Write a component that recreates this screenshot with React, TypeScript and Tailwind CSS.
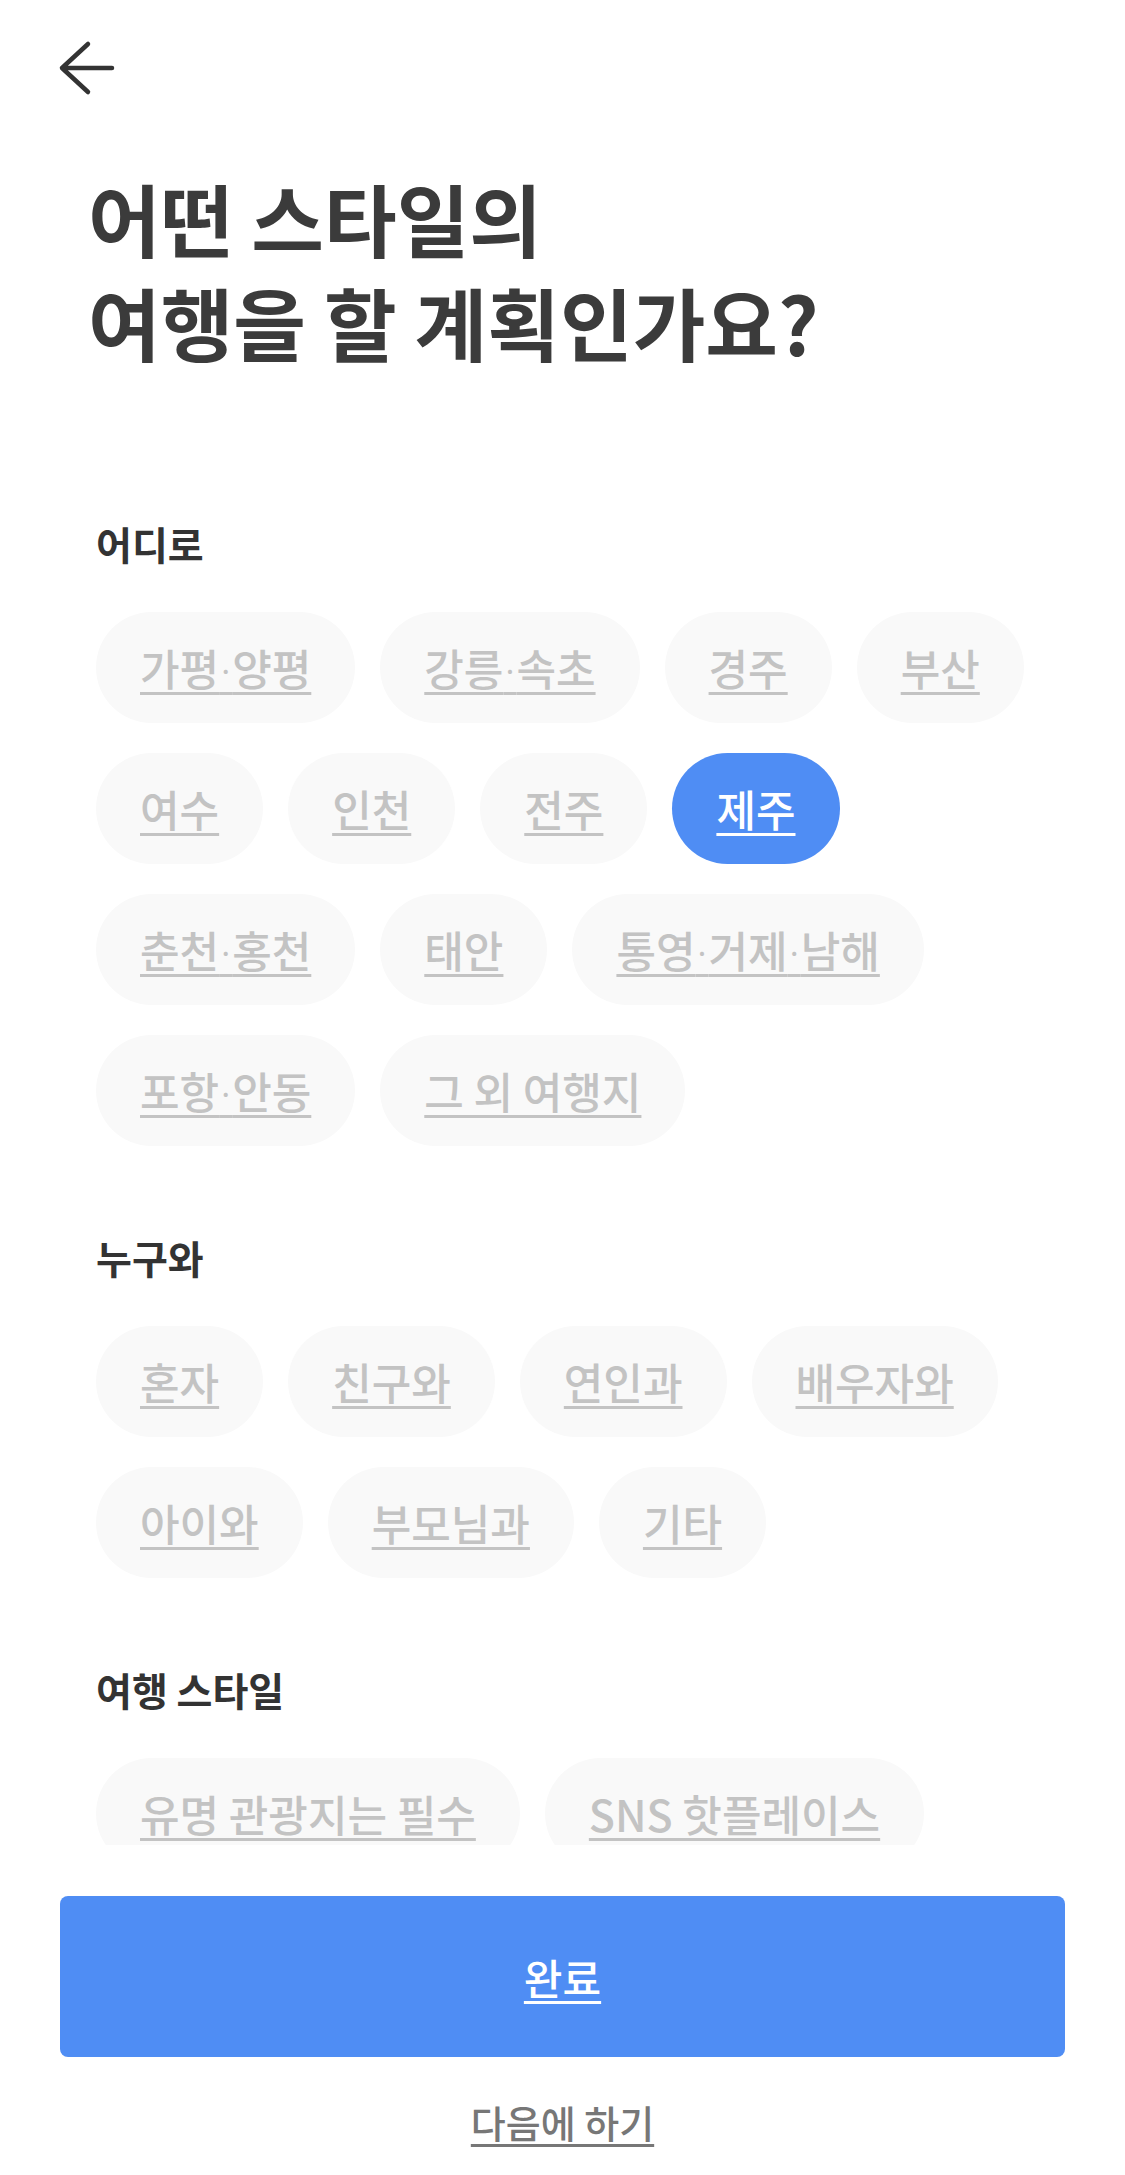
const font = { fontFamily: '"Noto Sans CJK KR", "Noto Sans", sans-serif' };

const regions = [
  "가평·양평",
  "강릉·속초",
  "경주",
  "부산",
  "여수",
  "인천",
  "전주",
  "제주",
  "춘천·홍천",
  "태안",
  "통영·거제·남해",
  "포항·안동",
  "그 외 여행지",
];

const companions = ["혼자", "친구와", "연인과", "배우자와", "아이와", "부모님과", "기타"];

const styles = ["유명 관광지는 필수", "SNS 핫플레이스"];

// the middle dot is set tight, as in the design
function ChipText({ label }: { label: string }) {
  const parts = label.split("·");
  return (
    <>
      {parts.map((part, i) => (
        <span key={i}>
          {i > 0 && <span className="align-[6px] text-[22px] font-bold">·</span>}
          {part}
        </span>
      ))}
    </>
  );
}

function Chip({ label, active }: { label: string; active?: boolean }) {
  return (
    <a
      href="#"
      className={
        active
          ? "flex h-[111px] items-center rounded-full bg-[#4f8df4] px-[44px] text-[43px] font-medium text-white underline decoration-[3px] underline-offset-[6px]"
          : "flex h-[111px] items-center rounded-full bg-[#f9f9f9] px-[44px] text-[43px] font-medium text-[#c3c3c3] underline decoration-[3px] underline-offset-[6px]"
      }
    >
      <ChipText label={label} />
    </a>
  );
}

function Section({ title, items, selected }: { title: string; items: string[]; selected?: string }) {
  return (
    <section className="mt-[86px] first:mt-[144px]">
      <h2 className="text-[39px] font-bold leading-[50px] text-[#333333]">{title}</h2>
      <div className="mt-[44px] flex flex-wrap gap-x-[25px] gap-y-[30px]">
        {items.map((item) => (
          <Chip key={item} label={item} active={item === selected} />
        ))}
      </div>
    </section>
  );
}

export default function App() {
  return (
    <div className="flex h-[2175px] w-full flex-col bg-white" style={font}>
      <header className="flex h-[136px] shrink-0 items-center pl-[56px]">
        <button aria-label="뒤로">
          <svg width="60" height="60" viewBox="0 0 60 60" fill="none">
            <path
              d="M32 6 L6 30 L32 54 M6 30 H56"
              stroke="#333333"
              strokeWidth="4.5"
              strokeLinecap="round"
              strokeLinejoin="round"
            />
          </svg>
        </button>
      </header>

      <main className="min-h-0 flex-1 overflow-hidden">
        <h1 className="mt-[30px] pl-[88px] text-[79px] font-bold leading-[104px] text-[#3b3b3b]">
          어떤 스타일의
          <br />
          여행을 할 계획인가요?
        </h1>
        <div className="px-[96px]">
          <Section title="어디로" items={regions} selected="제주" />
          <Section title="누구와" items={companions} />
          <Section title="여행 스타일" items={styles} />
        </div>
      </main>

      <footer className="flex h-[330px] shrink-0 flex-col items-center px-[60px] pt-[51px]">
        <a
          href="#"
          className="flex h-[161px] w-full items-center justify-center rounded-[8px] bg-[#4f8df4] text-[42px] font-medium text-white underline decoration-[3px] underline-offset-[6px]"
        >
          완료
        </a>
        <a
          href="#"
          className="mt-[37px] text-[38px] font-medium leading-[56px] text-[#777777] underline decoration-[3px] underline-offset-[6px]"
        >
          다음에 하기
        </a>
      </footer>
    </div>
  );
}
